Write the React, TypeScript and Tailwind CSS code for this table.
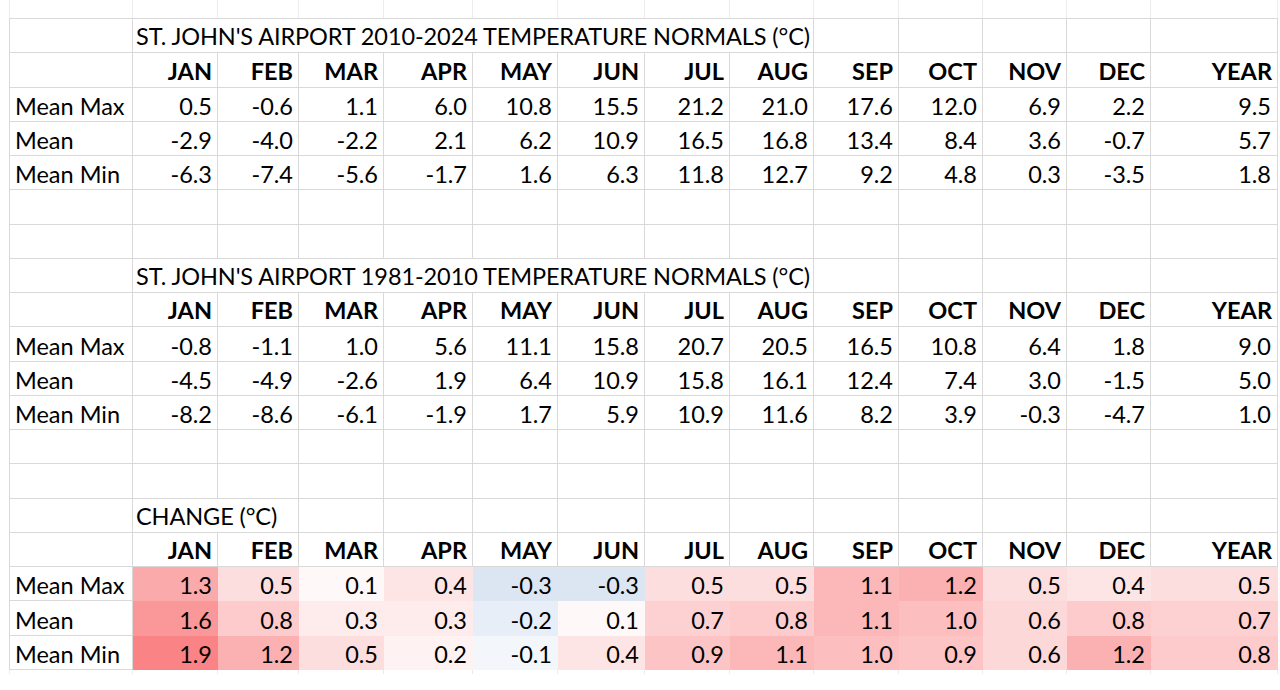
const months = ["JAN", "FEB", "MAR", "APR", "MAY", "JUN", "JUL", "AUG", "SEP", "OCT", "NOV", "DEC", "YEAR"];

const recent = [
  ["Mean Max", "0.5", "-0.6", "1.1", "6.0", "10.8", "15.5", "21.2", "21.0", "17.6", "12.0", "6.9", "2.2", "9.5"],
  ["Mean", "-2.9", "-4.0", "-2.2", "2.1", "6.2", "10.9", "16.5", "16.8", "13.4", "8.4", "3.6", "-0.7", "5.7"],
  ["Mean Min", "-6.3", "-7.4", "-5.6", "-1.7", "1.6", "6.3", "11.8", "12.7", "9.2", "4.8", "0.3", "-3.5", "1.8"],
];

const older = [
  ["Mean Max", "-0.8", "-1.1", "1.0", "5.6", "11.1", "15.8", "20.7", "20.5", "16.5", "10.8", "6.4", "1.8", "9.0"],
  ["Mean", "-4.5", "-4.9", "-2.6", "1.9", "6.4", "10.9", "15.8", "16.1", "12.4", "7.4", "3.0", "-1.5", "5.0"],
  ["Mean Min", "-8.2", "-8.6", "-6.1", "-1.9", "1.7", "5.9", "10.9", "11.6", "8.2", "3.9", "-0.3", "-4.7", "1.0"],
];

const change = [
  ["Mean Max", "1.3", "0.5", "0.1", "0.4", "-0.3", "-0.3", "0.5", "0.5", "1.1", "1.2", "0.5", "0.4", "0.5"],
  ["Mean", "1.6", "0.8", "0.3", "0.3", "-0.2", "0.1", "0.7", "0.8", "1.1", "1.0", "0.6", "0.8", "0.7"],
  ["Mean Min", "1.9", "1.2", "0.5", "0.2", "-0.1", "0.4", "0.9", "1.1", "1.0", "0.9", "0.6", "1.2", "0.8"],
];

// red / white / blue scale, like the spreadsheet's conditional format
function heat(v: number) {
  const mix = (to: number[], t: number) =>
    `rgb(${to.map((c) => Math.round(255 + (c - 255) * t)).join(",")})`;
  if (v >= 0) return mix([248, 105, 107], Math.min(v / 2.3, 1));
  return mix([90, 138, 198], Math.min(-v / 1.4, 1));
}

const cell = "flex items-end border-r border-b border-[#d9d9d9] pb-[4px] leading-[22px]";

function Blank({ n }: { n: number }) {
  return (
    <>
      {Array.from({ length: n }).map((_, i) => (
        <div key={i} className={cell} />
      ))}
    </>
  );
}

function Title({ text, span }: { text: string; span: string }) {
  return (
    <>
      <div className={cell} />
      <div className={`${cell} ${span} pl-[3px] pb-[5px] whitespace-nowrap tracking-[-0.1px]`}>{text}</div>
    </>
  );
}

function Header() {
  return (
    <>
      <div className={cell} />
      {months.map((m) => (
        <div key={m} className={`${cell} justify-end pr-[5px] pb-[5px] font-bold`}>
          {m}
        </div>
      ))}
    </>
  );
}

function Rows({ rows, colored }: { rows: string[][]; colored?: boolean }) {
  return (
    <>
      {rows.map((r) => (
        <div key={r[0]} className="contents">
          <div className={`${cell} pl-[5px]`}>{r[0]}</div>
          {r.slice(1).map((v, i) => (
            <div
              key={i}
              className={`${cell} justify-end ${i === 12 ? "pr-[6px]" : "pr-[5px]"}`}
              style={colored ? { backgroundColor: heat(parseFloat(v)), borderColor: heat(parseFloat(v)) } : undefined}
            >
              {v}
            </div>
          ))}
        </div>
      ))}
    </>
  );
}

export default function App() {
  return (
    <div className="h-[690px] w-[1280px] overflow-hidden bg-white font-['Lato',sans-serif] text-[23.5px] text-black">
      <div className="ml-[9px] grid h-[18px] grid-cols-[123px_85px_81px_85px_89px_85px_87px_85px_84px_85px_84px_84px_84px_127px] border-l border-[#ececec]">
        {Array.from({ length: 14 }).map((_, i) => (
          <div key={i} className="border-r border-[#ececec]" />
        ))}
      </div>
      <div className="ml-[9px] grid w-max auto-rows-[34.25px] grid-cols-[123px_85px_81px_85px_89px_85px_87px_85px_84px_85px_84px_84px_84px_127px] border-l border-t border-[#d9d9d9]">
        <Title text="ST. JOHN'S AIRPORT 2010-2024 TEMPERATURE NORMALS (°C)" span="col-span-8" />
        <Blank n={5} />
        <Header />
        <Rows rows={recent} />
        <Blank n={28} />
        <Title text="ST. JOHN'S AIRPORT 1981-2010 TEMPERATURE NORMALS (°C)" span="col-span-8" />
        <Blank n={5} />
        <Header />
        <Rows rows={older} />
        <Blank n={28} />
        <Title text="CHANGE (°C)" span="col-span-2" />
        <Blank n={11} />
        <Header />
        <Rows rows={change} colored />
      </div>
      <div className="ml-[9px] grid h-[4px] grid-cols-[123px_85px_81px_85px_89px_85px_87px_85px_84px_85px_84px_84px_84px_127px] border-l border-[#ececec]">
        {Array.from({ length: 14 }).map((_, i) => (
          <div key={i} className="border-r border-[#ececec]" />
        ))}
      </div>
    </div>
  );
}
